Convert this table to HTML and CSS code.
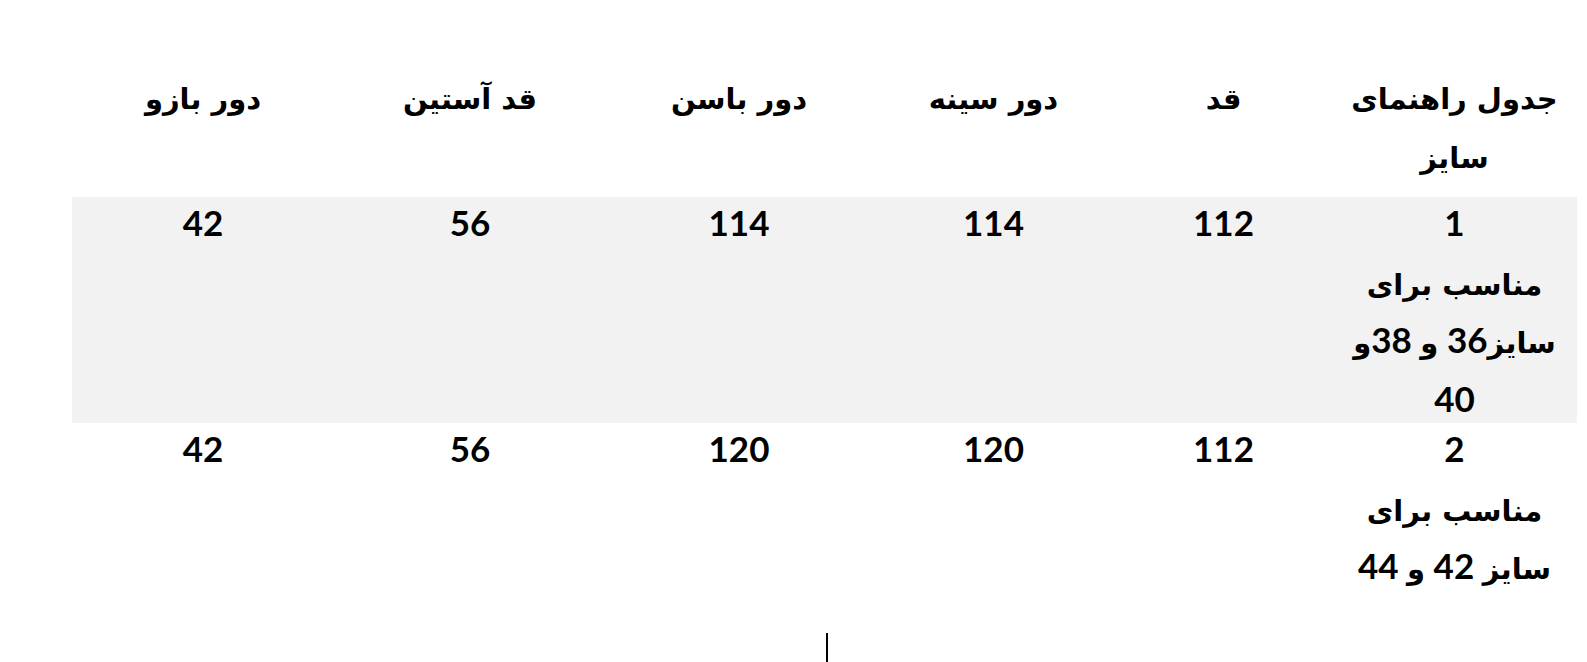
FILE: index.html
```html
<!DOCTYPE html>
<html lang="fa" dir="rtl">
<head>
<meta charset="utf-8">
<link rel="stylesheet" href="styles.css">
</head>
<body>
<div class="page">
  <table class="size-table">
    <colgroup>
      <col class="c1"><col class="c2"><col class="c3"><col class="c4"><col class="c5"><col class="c6">
    </colgroup>
    <tr class="head">
      <td><div class="cell"><span class="ar">جدول راهنمای</span><br><span class="ar">سایز</span></div></td>
      <td><div class="cell"><span class="ar">قد</span></div></td>
      <td><div class="cell"><span class="ar">دور سینه</span></div></td>
      <td><div class="cell"><span class="ar">دور باسن</span></div></td>
      <td><div class="cell"><span class="ar">قد آستین</span></div></td>
      <td><div class="cell"><span class="ar">دور بازو</span></div></td>
    </tr>
    <tr class="shade">
      <td><div class="cell">1<br><span class="ar">مناسب برای</span><br><span class="ar">سایز</span>36 <span class="ar">و</span> 38<span class="ar">و</span><br>40</div></td>
      <td><div class="cell">112</div></td>
      <td><div class="cell">114</div></td>
      <td><div class="cell">114</div></td>
      <td><div class="cell">56</div></td>
      <td><div class="cell">42</div></td>
    </tr>
    <tr>
      <td><div class="cell">2<br><span class="ar">مناسب برای</span><br><span class="ar">سایز</span> 42 <span class="ar">و</span> 44</div></td>
      <td><div class="cell">112</div></td>
      <td><div class="cell">120</div></td>
      <td><div class="cell">120</div></td>
      <td><div class="cell">56</div></td>
      <td><div class="cell">42</div></td>
    </tr>
  </table>
  <div class="caret-line"><span class="caret"></span></div>
</div>
</body>
</html>
```

FILE: styles.css
```css
html, body {
  margin: 0;
  padding: 0;
  background: #ffffff;
  overflow: hidden;
}
.page {
  padding: 80px 10px 0 72px;
}
.size-table {
  width: 1505px;
  border-collapse: collapse;
  table-layout: fixed;
  font-family: Lato, "DejaVu Sans", sans-serif;
  font-weight: bold;
  font-size: 35px;
  line-height: 58.5px;
  color: #000;
}
.c1 { width: 245px; }
.c2 { width: 217px; }
.c3 { width: 243px; }
.c4 { width: 266px; }
.c5 { width: 272px; }
.c6 { width: 262px; }
.size-table td {
  padding: 0;
  text-align: center;
  vertical-align: top;
  white-space: nowrap;
}
.cell {
  margin-top: -4px;
  margin-bottom: -4px;
}
.head .cell {
  margin-top: -14px;
  margin-bottom: 0;
  padding-bottom: 14px;
}
.ar {
  font-family: "DejaVu Sans", sans-serif;
  font-size: 29px;
  line-height: 1;
}
.shade td { background: #f2f2f2; }
.caret-line {
  display: flex;
  justify-content: center;
  padding-top: 42px;
  padding-left: 5px;
}
.caret {
  display: block;
  width: 2px;
  height: 32px;
  background: #000;
}
```
